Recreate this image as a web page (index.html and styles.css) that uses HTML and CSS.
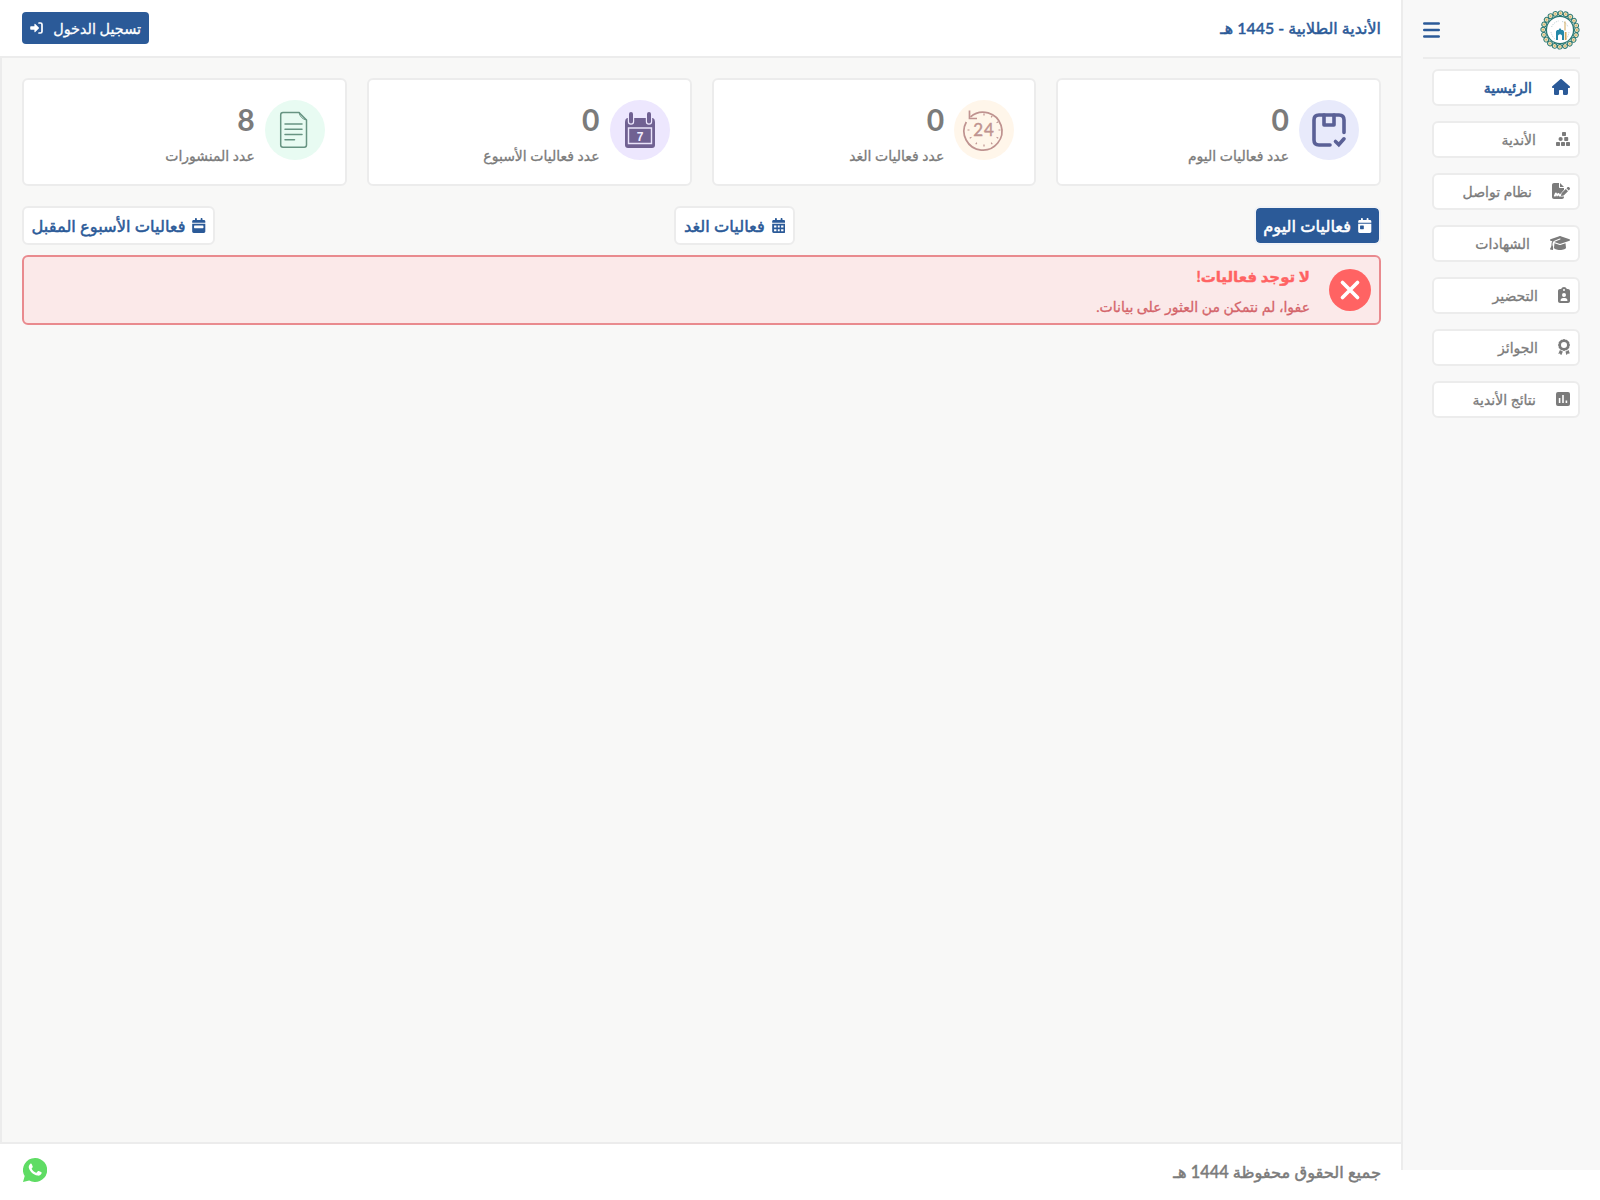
FILE: index.html
```html
<!DOCTYPE html>
<html lang="ar" dir="rtl">
<head>
<meta charset="utf-8">
<title>الأندية الطلابية</title>
<link rel="stylesheet" href="styles.css">
</head>
<body>
<div class="app">
  <aside class="sidebar">
    <div class="brand">
      <svg class="logo" viewBox="0 0 40 40">
        <circle cx="20" cy="20" r="16.800" fill="none" stroke="#2b7975" stroke-width="5.600" stroke-linecap="round" stroke-dasharray="0.01 5.268"/>
        <circle cx="20" cy="20" r="16.800" fill="none" stroke="#efe0ba" stroke-width="3.800" stroke-linecap="round" stroke-dasharray="0.01 5.268"/>
        <circle cx="20" cy="20" r="16.800" fill="none" stroke="#d4b36c" stroke-width="1.800" stroke-linecap="round" stroke-dasharray="0.01 5.268"/>
        <circle cx="20" cy="20" r="13.600" fill="#fff" stroke="#2b7975" stroke-width="1.300"/>
        <path d="M11.500 17q2.500-5 7-6M22 11.500q4 .5 6 5.500M11 22q1 5 4.500 7.500M29 22q-.5 4.500-3.500 7.500" fill="none" stroke="#bccfd2" stroke-width="1" stroke-dasharray="1.200 1"/>
        <path d="M16 30V21.500l1-1.500h1.500l1.500-2 1.500 2H23l1 1.500V30h-2v-4.500q-2-2.500-4 0V30z" fill="#2488a8"/>
        <path d="M24.500 11.500h1v9h-1zM24.800 22h1.700v8h-1.700z" fill="#d1a75a"/>
      </svg>
      <svg class="burger" viewBox="0 0 17 16"><path d="M1.200 1.500h14.600M1.200 8h14.600M1.200 14.500h14.600" stroke="#2b5a98" stroke-width="2.400" stroke-linecap="round"/></svg>
    </div>
    <nav class="menu">
      <a class="item current"><svg class="w18" viewBox="0 0 576 512"><path d="M575.800 255.500c0 18-15 32.100-32 32.100h-32l.7 160.200c0 35.300-20 64.200-48.500 64.200H392c-22.100 0-40-17.900-40-40v-88.300c0-17.700-14.300-32-32-32h-64c-17.700 0-32 14.300-32 32V472c0 22.100-17.900 40-40 40h-71.900C83 512 64 494 64 472V287.600H32c-18 0-32-14-32-32.100 0-9 3-17 10-24L266.400 8c7-7 15-8 22-8s15 2 21 7l255.400 224.500c8 7 12 15 11 24z"/></svg><span>الرئيسية</span></a>
      <a class="item"><svg class="w14" viewBox="0 0 14 14"><rect x="6" y="0" width="4" height="4" rx=".8"/><circle cx="4.600" cy="7" r="2.100"/><rect x="8.200" y="5" width="4" height="4" rx=".8"/><rect y="10" width="4" height="4" rx=".8"/><rect x="5" y="10" width="4" height="4" rx=".8"/><rect x="10" y="10" width="4" height="4" rx=".8"/></svg><span>الأندية</span></a>
      <a class="item"><svg class="w18" viewBox="0 0 576 512"><path d="M64 0C28.700 0 0 28.700 0 64v384c0 35.300 28.700 64 64 64h256c35.300 0 64-28.700 64-64v-19.700c-3 .7-6 1.400-9.100 1.700l-49.700 4.500c-4.700.4-9.300.7-14 .7H240c-8.900 0-16-6.500-20-14l-15-30-29 33c-8 8-22 8-28-2l-14-29-20 40H77c-18-6-21-23-14-35l34-79c10-20 38-22 50-3l19 32 15-17c16-18 45-14 56 8l15 28L384 219v-59H256c-17.700 0-32-14.300-32-32V0zm192 0v128h128zM549.800 139.700c-15.600-15.600-40.900-15.600-56.600 0l-29.400 29.400 71 71 29.400-29.400c15.600-15.600 15.600-40.900 0-56.600zM311.900 321c-4.100 4.100-7 9.200-8.400 14.900l-15 60.100c-1.400 5.500.2 11.200 4.200 15.200s9.700 5.600 15.200 4.200l60.100-15c5.600-1.400 10.800-4.300 14.900-8.400l129.200-129.300-71-71z"/></svg><span>نظام تواصل</span></a>
      <a class="item"><svg class="w20" viewBox="0 0 640 512"><path d="M320 32c-8.100 0-16.100 1.400-23.700 4.100L15.800 137.400C6.300 140.900 0 149.900 0 160s6.300 19.100 15.800 22.600l57.900 20.900C57.300 229.300 48 259.800 48 291.900V320c0 28.400-10.800 57.700-22.300 80.800-6.500 13-13.900 25.800-22.500 37.600-3.200 4.300-4.100 9.900-2.300 15s6 8.900 11.200 10.200l64 16c4.200 1.100 8.700.3 12.400-2s6.300-6.100 7.100-10.400c8.600-42.800 4.300-81.200-2.100-108.700-3.200-14.200-7.500-28.700-13.500-42v-24.600c0-30.200 10.200-58.700 27.900-81.500 12.900-15.500 29.600-28 49.200-35.700l157-61.700c8.200-3.200 17.500.8 20.700 9s-.8 17.500-9 20.700l-157 61.700c-12.400 4.900-23.300 12.400-32.200 21.600l159.600 57.600c7.600 2.700 15.600 4.100 23.700 4.100s16.100-1.400 23.700-4.100l280.600-101c9.500-3.500 15.800-12.500 15.800-22.600s-6.300-19.100-15.800-22.600L343.700 36.100C336.100 33.400 328.100 32 320 32zM128 408c0 35.300 86 72 192 72s192-36.700 192-72l-15.300-145.400L354.500 314c-11.100 4-22.800 6-34.500 6s-23.500-2-34.500-6l-142.200-51.400z"/></svg><span>الشهادات</span></a>
      <a class="item"><svg class="w12" viewBox="0 0 384 512"><path fill-rule="evenodd" d="M192 0c-41.800 0-77.400 26.700-90.500 64H64C28.700 64 0 92.700 0 128v320c0 35.300 28.700 64 64 64h256c35.300 0 64-28.700 64-64V128c0-35.300-28.700-64-64-64h-37.500C269.400 26.700 233.800 0 192 0zm0 64a32 32 0 1 1 0 64 32 32 0 1 1 0-64zm0 128a64 64 0 1 1 0 128 64 64 0 1 1 0-128zM80 432c0-44 36-80 80-80h64c44 0 80 36 80 80 0 9-7 16-16 16H96c-9 0-16-7-16-16z"/></svg><span>التحضير</span></a>
      <a class="item"><svg class="w12" viewBox="0 0 384 512"><path fill-rule="evenodd" d="M173.800 5.500c11-7.300 25.400-7.300 36.400 0L228 17.200c6 3.900 13 5.800 20.100 5.400l21.300-1.300c13.200-.8 25.600 6.400 31.500 18.200l9.600 19.100c3.200 6.400 8.400 11.500 14.700 14.700l19.300 9.700c11.800 5.900 19 18.300 18.200 31.500l-1.300 21.300c-.4 7.100 1.500 14.200 5.400 20.100l11.800 17.800c7.300 11 7.300 25.400 0 36.400L366.800 228c-3.900 6-5.800 13-5.400 20.100l1.300 21.300c.8 13.200-6.400 25.600-18.200 31.500l-19.100 9.600c-6.400 3.200-11.500 8.400-14.700 14.700l-9.700 19.300c-5.900 11.800-18.300 19-31.500 18.200l-21.300-1.300c-7.100-.4-14.200 1.500-20.100 5.400l-17.800 11.800c-11 7.300-25.400 7.300-36.400 0L156 366.800c-6-3.900-13-5.800-20.100-5.400l-21.300 1.300c-13.200.8-25.600-6.400-31.500-18.200L73.500 325.400c-3.200-6.400-8.400-11.500-14.700-14.700L39.500 301c-11.800-5.900-19-18.300-18.200-31.500l1.300-21.300c.4-7.100-1.500-14.200-5.400-20.100L5.500 210.200c-7.300-11-7.300-25.400 0-36.400L17.200 156c3.900-6 5.800-13 5.400-20.100l-1.300-21.300c-.8-13.200 6.400-25.600 18.200-31.500l19.100-9.600C65 70.200 70.200 65 73.400 58.600l9.700-19.100c5.900-11.800 18.300-19 31.500-18.200l21.300 1.300c7.100.4 14.200-1.500 20.100-5.400zM288 192a96 96 0 1 0-192 0 96 96 0 1 0 192 0zM25 437l39-90c15 29 35 50 70 47l22 4-45 105c-5 9-18 12-25 2l-24-39-40 6c-12 1-18-12 2-35zm215-39 22-4c35 3 55-18 70-47l39 90c4 17-5 32-20 31l-40-6-24 39c-7 10-20 7-25-2z"/></svg><span>الجوائز</span></a>
      <a class="item"><svg class="w14" viewBox="0 0 14 14"><path fill-rule="evenodd" d="M2 0h10a2 2 0 0 1 2 2v10a2 2 0 0 1-2 2H2a2 2 0 0 1-2-2V2a2 2 0 0 1 2-2zm.8 6v5h1.600V6zM6.200 3v8h1.600V3zm3.400 5.500V11h1.600V8.500z"/></svg><span>نتائج الأندية</span></a>
    </nav>
  </aside>
  <div class="page">
    <header class="topbar">
      <h1>الأندية الطلابية - 1445 هـ</h1>
      <a class="login"><span>تسجيل الدخول</span><svg viewBox="0 0 13 12"><path d="M9 1h1.500Q12 1 12 2.500v7Q12 11 10.500 11H9" fill="none" stroke="#fff" stroke-width="1.700" stroke-linecap="round"/><path d="M8.800 6.500 5.300 10q-.9.700-.9-.5V7.700H1q-.8 0-.8-.8V5.100q0-.8.8-.8h3.400V2.500q0-1.200.9-.5l3.500 3.500q.5.500 0 1z" fill="#fff"/></svg></a>
    </header>
    <main class="content">
      <section class="stats">
        <div class="stat"><svg class="disc" viewBox="0 0 60 60"><circle cx="30" cy="30" r="30" fill="#e8eafb"/><g fill="none" stroke="#5a6096" stroke-width="3.600" stroke-linecap="round"><path d="M45 32.500V20q0-5-5-5H20q-5 0-5 5v20q0 5 5 5h11"/><path d="M25 15v10h10V15" stroke-linejoin="round"/><path d="m36.500 41.500 3.300 3.100 5.200-5.800"/></g></svg><div class="figures"><b>0</b><span>عدد فعاليات اليوم</span></div></div>
        <div class="stat"><svg class="disc" viewBox="0 0 60 60"><circle cx="30" cy="30" r="30" fill="#fff6ea"/><g fill="none" stroke="#bf9390" stroke-width="1.700"><path d="M16.500 16.800a19 19 0 1 1-4.200 5.200"/><path d="M15.500 10.500v8h7.500"/><path d="M30 13.500v2M30 44.500v2M46.500 30h-2M13.500 30h2M38.200 15.700l-1 1.700M44.300 21.800l-1.700 1M44.300 38.200l-1.700-1M38.200 44.300l-1-1.700M21.800 44.300l1-1.700M15.700 38.200l1.700-1" stroke-width="1.200"/></g><text x="30" y="35.500" text-anchor="middle" direction="ltr" class="d24">24</text></svg><div class="figures"><b>0</b><span>عدد فعاليات الغد</span></div></div>
        <div class="stat"><svg class="disc" viewBox="0 0 60 60"><circle cx="30" cy="30" r="30" fill="#ede7fe"/><path d="M17 18h26q2 1 2 4v23q0 3-3 3H18q-3 0-3-3V22q0-3 2-4z" fill="#706192"/><path d="M21 14.500v7M39 14.500v7" stroke="#ede7fe" stroke-width="6.400" stroke-linecap="round"/><path d="M21 14v7.500M39 14v7.500" stroke="#706192" stroke-width="4" stroke-linecap="round"/><path d="M18.500 28h23v15.500h-23z" fill="none" stroke="#e9e3fa" stroke-width="1.400"/><text x="30" y="40.500" text-anchor="middle" direction="ltr" class="d7">7</text></svg><div class="figures"><b>0</b><span>عدد فعاليات الأسبوع</span></div></div>
        <div class="stat"><svg class="disc" viewBox="0 0 60 60"><circle cx="30" cy="30" r="30" fill="#e8fbf2"/><g fill="none" stroke="#679482" stroke-width="1.500" stroke-linecap="round"><path d="M34 12.500H18q-2.300 0-2.300 2.300V45q0 2.200 2.300 2.200h21.300q2.200 0 2.200-2.200V20z"/><path d="M34 12.500q1.300 6.500 7.500 7.500" stroke-width="1"/><path d="M20 24h17M20 29.300h17M20 34.500h17M20 39.700h9.500"/></g></svg><div class="figures"><b>8</b><span>عدد المنشورات</span></div></div>
      </section>
      <div class="tabs">
        <a class="tab active"><svg viewBox="0 0 448 512"><path fill-rule="evenodd" d="M128 0c17.700 0 32 14.300 32 32v32h128V32c0-17.700 14.300-32 32-32s32 14.300 32 32v32h48c26.500 0 48 21.500 48 48v48H0v-48c0-26.500 21.500-48 48-48h48V32c0-17.700 14.300-32 32-32zM0 192h448v272c0 26.500-21.500 48-48 48H48c-26.500 0-48-21.500-48-48zm80 64c-8.800 0-16 7.200-16 16v96c0 8.800 7.200 16 16 16h96c8.800 0 16-7.200 16-16v-96c0-8.800-7.200-16-16-16z"/></svg><span>فعاليات اليوم</span></a>
        <a class="tab"><svg viewBox="0 0 448 512"><path fill-rule="evenodd" d="M128 0c17.700 0 32 14.300 32 32v32h128V32c0-17.700 14.300-32 32-32s32 14.300 32 32v32h48c26.500 0 48 21.500 48 48v48H0v-48c0-26.500 21.500-48 48-48h48V32c0-17.700 14.300-32 32-32zM0 192h448v272c0 26.500-21.500 48-48 48H48c-26.500 0-48-21.500-48-48zm64 64v64h80v-64zm128 0v64h64v-64zm112 0v64h80v-64zM64 384v64h80v-64zm128 0v64h64v-64zm112 0v64h80v-64z"/></svg><span>فعاليات الغد</span></a>
        <a class="tab"><svg viewBox="0 0 448 512"><path fill-rule="evenodd" d="M128 0c17.700 0 32 14.300 32 32v32h128V32c0-17.700 14.300-32 32-32s32 14.300 32 32v32h48c26.500 0 48 21.500 48 48v48H0v-48c0-26.500 21.500-48 48-48h48V32c0-17.700 14.300-32 32-32zM0 192h448v272c0 26.500-21.500 48-48 48H48c-26.500 0-48-21.500-48-48zm80 64c-8.800 0-16 7.200-16 16v64c0 8.800 7.200 16 16 16h288c8.800 0 16-7.200 16-16v-64c0-8.800-7.200-16-16-16z"/></svg><span>فعاليات الأسبوع المقبل</span></a>
      </div>
      <div class="alert">
        <svg viewBox="0 0 42 42"><circle cx="21" cy="21" r="21" fill="#ff6363"/><path d="m13.500 13.500 15 15m0-15-15 15" stroke="#fff" stroke-width="3.700" stroke-linecap="round"/></svg>
        <div class="message"><strong>لا توجد فعاليات!</strong><span>عفوا، لم نتمكن من العثور على بيانات.</span></div>
      </div>
    </main>
    <footer class="footer">
      <span>جميع الحقوق محفوظة 1444 هـ</span>
      <svg viewBox="0 0 24 24"><path d="M12 0a12 12 0 0 0-10.300 18.100L0 24l6.200-1.600A12 12 0 1 0 12 0z" fill="#5fdc64"/><path d="M7.200 5.900c.5-.5 1.300-.4 1.600.3l.9 2.200c.2.500 0 .8-.9 1.900-.2.300-.2.500 0 .8 1 1.700 2.300 2.900 4.200 3.700.3.100.5.100.7-.2l1.100-1.300c.3-.4.600-.4 1-.2l2.200 1c.7.300.8.600.5 1.500-.5 1.500-2.300 2.300-3.800 2-4.600-1-8.100-4.400-8.900-7.900-.3-1.500.4-3 1.400-3.800z" fill="#fff"/></svg>
    </footer>
  </div>
</div>
</body>
</html>
```
FILE: styles.css
```css
* { box-sizing: border-box; }
body { margin: 0; background: #fff; color: #7b7b7b; font-family: Lato, "DejaVu Sans", sans-serif; font-size: 14px; overflow: hidden; }
svg { display: block; flex: none; fill: currentColor; }
span, h1, strong { white-space: nowrap; }
span { -webkit-text-stroke: .3px; }
.app { display: flex; height: 1200px; }
.sidebar { width: 199px; height: 1170px; padding: 0 20px; background: #f8f8f8; border-left: 2px solid #ececec; }
.brand { height: 59px; display: flex; align-items: center; justify-content: space-between; border-bottom: 2px solid #ececec; padding-top: 2px; }
.logo { width: 40px; height: 40px; }
.burger { width: 17px; height: 16px; }
.menu { display: flex; flex-direction: column; gap: 15px; padding: 10px 0 0 9px; }
.item { height: 37px; display: flex; align-items: center; gap: 20px; padding: 0 8px; background: #fff; border: 2px solid #ececec; border-radius: 6px; }
.item svg { margin-bottom: 1px; }
.item.current { color: #2b5a98; }
.item.current span { -webkit-text-stroke: .6px; }
.w18 { width: 18px; height: 16px; }
.w14 { width: 14px; height: 14px; }
.w20 { width: 20px; height: 16px; }
.w12 { width: 12px; height: 16px; }
.page { flex: 1; min-width: 0; display: flex; flex-direction: column; }
.topbar { height: 58px; display: flex; align-items: center; justify-content: space-between; padding: 0 20px 0 22px; border-bottom: 2px solid #ececec; }
h1 { margin: 0; font-size: 15.900px; color: #2b5a98; font-weight: 400; -webkit-text-stroke: .5px; }
.login { width: 127px; height: 32px; display: flex; align-items: center; justify-content: space-between; padding: 0 8px; color: #fff; background: #2b5a98; border-radius: 4px; font-size: 14.400px; }
.login svg { width: 13px; height: 12px; }
.content { flex: 1; padding: 20px 20px 0; border-left: 2px solid #ececec; background: #f8f8f7; }
.stats { display: grid; grid-template-columns: repeat(4, 1fr); gap: 20px; }
.stat { height: 108px; display: flex; gap: 10px; padding: 20px 20px 0; background: #fff; border: 2px solid #ececec; border-radius: 6px; }
.disc { width: 60px; height: 60px; }
.figures { display: flex; flex-direction: column; gap: 10px; padding-top: 2px; }
.figures b { font: 700 30px/34px Lato, sans-serif; color: #7b7b7b; }
.figures span { line-height: 20px; }
.d24 { font: 17px Lato, sans-serif; fill: #bf9390; stroke: #bf9390; stroke-width: .4px; letter-spacing: .8px; }
.d7 { font: 700 12px "Liberation Sans", sans-serif; fill: #f2edff; }
.tabs { display: flex; justify-content: space-between; margin-top: 20px; }
.tab { height: 39px; display: flex; align-items: center; gap: 7px; padding: 0 7.500px; color: #2b5a98; font-size: 16.300px; background: #fff; border: 2px solid #ececec; border-radius: 6px; }
.tab span { -webkit-text-stroke: .5px; }
.tab svg { width: 13.500px; height: 15px; }
.tab.active { background: #2b5a98; color: #fff; background-clip: padding-box; border-color: #f1f3f7; }
.alert { height: 70px; display: flex; align-items: center; gap: 19px; margin-top: 10px; padding: 0 8px; background: #fbe9e9; border: 2px solid #e98a8e; border-radius: 6px; }
.alert svg { width: 42px; height: 42px; }
.message { display: flex; flex-direction: column; gap: 11px; padding-top: 2px; }
.message strong { color: #ff6363; font-size: 15px; line-height: 20px; -webkit-text-stroke: .4px; }
.message span { color: #d4646a; line-height: 20px; }
.footer { height: 58px; display: flex; justify-content: space-between; align-items: center; padding: 0 20px 0 23px; border-top: 2px solid #ececec; font-size: 16.300px; }
.footer span { -webkit-text-stroke: .5px; }
.footer svg { width: 24px; height: 24px; margin-bottom: 4px; }
```
